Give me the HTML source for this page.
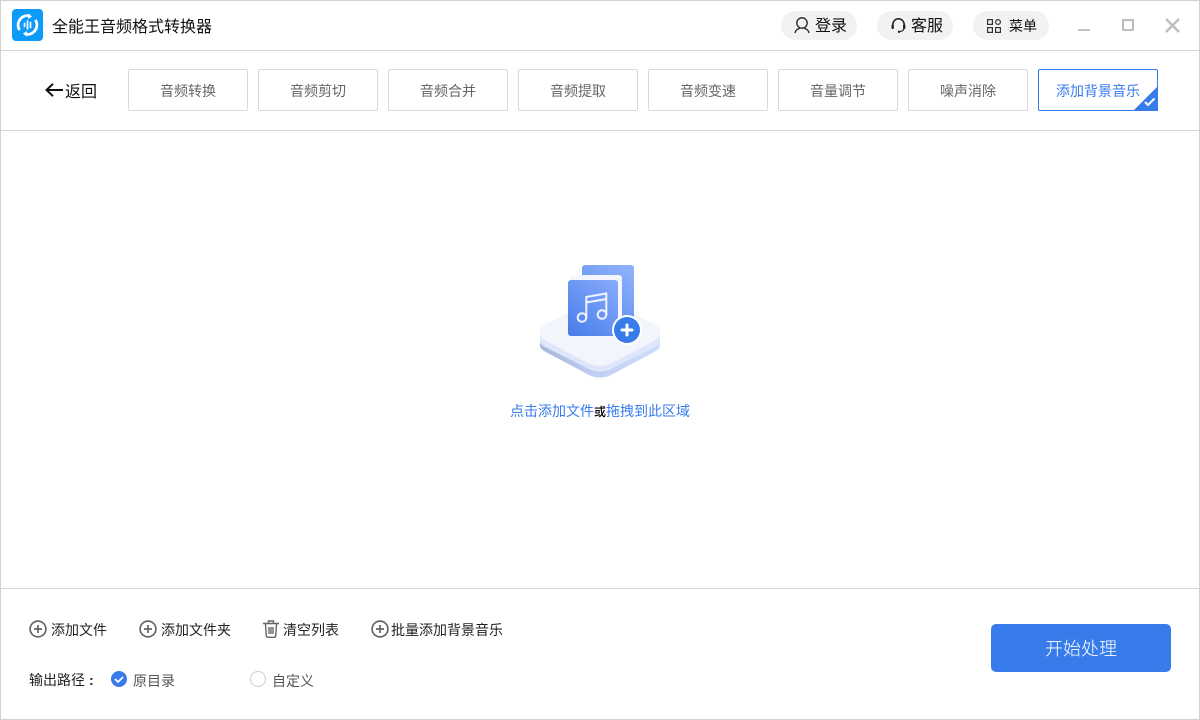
<!DOCTYPE html>
<html lang="zh"><head><meta charset="utf-8"><title>全能王音频格式转换器</title>
<style>
*{box-sizing:border-box;margin:0;padding:0}
html,body{width:1200px;height:720px;overflow:hidden;background:#fff}
body{position:relative;font-family:"Liberation Sans","Noto Sans CJK SC",sans-serif;color:#222}
.a{position:absolute;white-space:nowrap}
.frame{left:0;top:0;width:1200px;height:720px;border:1px solid #d2d2d2;pointer-events:none}
.line{position:absolute;left:1px;width:1198px;height:1px;background:#d6d6d6}
.tab{position:absolute;top:69px;width:120px;height:42px;border:1px solid #d9d9d9;border-radius:2px;font-size:14px;line-height:42px;text-align:center;color:#666}
.pill{position:absolute;top:11px;width:76px;height:29px;border-radius:15px;background:#f2f2f2}
.t14{font-size:14px;line-height:20px}
svg{position:absolute;overflow:visible}
</style></head><body>

<svg style="left:12px;top:9px" width="31" height="32" viewBox="0 0 31 32">
<rect width="31" height="32" rx="4" fill="#0d9bfb"/>
<path d="M7.500 21A9.500 9.500 0 0 1 17 6.700M23.500 11A9.500 9.500 0 0 1 14 25.300" fill="none" stroke="#fff" stroke-width="2.800"/>
<path d="M16.500 4.500l3.500 3-4 2.500zM14.500 27.500l-3.500-3 4-2.500z" fill="#fff"/>
<path d="M12.500 14.500v3M15.500 12v8M18.500 13.500v5" stroke="#fff" stroke-width="1.700" stroke-linecap="round"/>
</svg>
<div class="a" style="left:52px;top:17px;font-size:16px;line-height:22px;color:#111">全能王音频格式转换器</div>

<div class="pill" style="left:781px"></div>
<div class="pill" style="left:877px"></div>
<div class="pill" style="left:973px"></div>
<svg style="left:794px;top:16px" width="16" height="17" viewBox="0 0 16 17" fill="none" stroke="#222" stroke-width="1.300">
<circle cx="8" cy="7" r="5.200"/><path d="M1 17c.3-2.500 2.500-4 4.800-4.700M15 17c-.3-2.500-2.500-4-4.800-4.700"/></svg>
<div class="a" style="left:815px;top:16px;font-size:16px;line-height:22px;color:#111">登录</div>
<svg style="left:891px;top:18px" width="15" height="16" viewBox="0 0 15 16" fill="none" stroke="#222" stroke-width="1.500">
<path d="M1.800 9V6.500a5.700 5.700 0 0 1 11.400 0V9"/><path d="M13.200 9c0 2.500-1.700 4.300-4.500 4.700" stroke-width="1.200"/><rect x=".5" y="6.500" width="2.400" height="4.500" rx="1" fill="#222" stroke="none"/><rect x="12" y="6.500" width="2.400" height="4.500" rx="1" fill="#222" stroke="none"/><circle cx="8" cy="13.800" r="1.200" fill="#222" stroke="none"/></svg>
<div class="a" style="left:911px;top:16px;font-size:16px;line-height:22px;color:#111">客服</div>
<svg style="left:987px;top:19px" width="14" height="14" viewBox="0 0 14 14" fill="none" stroke="#333" stroke-width="1.200">
<rect x=".6" y=".6" width="4.800" height="4.800"/><rect x=".6" y="8.600" width="4.800" height="4.800"/><rect x="8.600" y="8.600" width="4.800" height="4.800"/><circle cx="11" cy="3" r="2.400"/></svg>
<div class="a" style="left:1009px;top:16px;font-size:14px;line-height:20px;color:#111">菜单</div>

<div class="a" style="left:1078px;top:29px;width:12px;height:2px;background:#c4c4c4"></div>
<div class="a" style="left:1122px;top:19px;width:12px;height:12px;border:2px solid #bdbdbd;border-radius:1px"></div>
<svg style="left:1165px;top:18px" width="15" height="15" viewBox="0 0 15 15"><path d="M1 1l13 13M14 1L1 14" stroke="#bdbdbd" stroke-width="2.400"/></svg>

<div class="line" style="top:50px"></div>

<svg style="left:45px;top:83px" width="19" height="14" viewBox="0 0 19 14" fill="none" stroke="#111" stroke-width="2"><path d="M18 7H1.500M8 .8L1.500 7 8 13.200"/></svg>
<div class="a" style="left:65px;top:82px;font-size:16px;line-height:22px;color:#111">返回</div>

<div class="tab" style="left:128px">音频转换</div>
<div class="tab" style="left:258px">音频剪切</div>
<div class="tab" style="left:388px">音频合并</div>
<div class="tab" style="left:518px">音频提取</div>
<div class="tab" style="left:648px">音频变速</div>
<div class="tab" style="left:778px">音量调节</div>
<div class="tab" style="left:908px">噪声消除</div>
<div class="tab" style="left:1038px;border-color:#387cec;color:#387cec">添加背景音乐</div>
<svg style="left:1133px;top:86px" width="25" height="25" viewBox="0 0 25 25"><path d="M25 0V25H0z" fill="#387cec"/><path d="M12 16l3 3 6.500-6.500" fill="none" stroke="#fff" stroke-width="2"/></svg>

<div class="line" style="top:130px"></div>

<svg style="left:520px;top:255px" width="160" height="130" viewBox="0 0 160 130">
<defs>
<linearGradient id="g1" x1=".8" y1="0" x2=".2" y2="1"><stop offset="0" stop-color="#8db0fb"/><stop offset="1" stop-color="#5688ee"/></linearGradient>
<linearGradient id="g2" x1=".9" y1="0" x2=".1" y2="1"><stop offset="0" stop-color="#86aafb"/><stop offset="1" stop-color="#4a7eea"/></linearGradient>
<linearGradient id="g3" x1="0" y1="0" x2="1" y2="0"><stop offset="0" stop-color="#a7b6d9"/><stop offset=".5" stop-color="#c2d0f5"/><stop offset="1" stop-color="#d0dcfb"/></linearGradient>
</defs>
<path d="M20 80v10c0 3 2 5 5 6.500l43 23c8 4 16 4 24 0l43-23c3-1.500 5-3.500 5-6.500V80z" fill="url(#g3)"/>
<path d="M20 78v8c0 2.500 2 4.500 5 6l43 21.500c8 4 16 4 24 0l43-21.500c3-1.500 5-3.500 5-6v-8z" fill="#dfe6fb"/>
<path d="M20 78Q20 72 26 69L70 47Q80 42 90 47L134 69Q140 72 140 78Q140 83 134 86L92 108Q80 114 68 108L26 86Q20 83 20 78z" fill="#f3f5fd"/>
<rect x="62" y="10" width="52" height="66" rx="3" fill="url(#g1)"/>
<rect x="50" y="20" width="52" height="66" rx="3" fill="#f4f6fd"/>
<rect x="48" y="25" width="50" height="56" rx="3" fill="url(#g2)"/>
<g fill="none" stroke="#eef3ff" stroke-width="2"><circle cx="62" cy="62.500" r="4.300"/><circle cx="82" cy="59.500" r="4.300"/><path d="M66.300 62V42l20-3.500V60M66.300 47.500l20-3.500"/></g>
<circle cx="107" cy="75" r="15" fill="#fff"/>
<circle cx="107" cy="75" r="13" fill="#387cec"/>
<path d="M107 70v10M102 75h10" stroke="#fff" stroke-width="3" stroke-linecap="round"/>
</svg>

<div class="a" style="left:510px;top:401px;font-size:14px;line-height:20px;color:#387cec">点击添加文件<span style="color:#000;font-size:12px;font-weight:500">或</span>拖拽到此区域</div>

<div class="line" style="top:588px"></div>

<svg style="left:29px;top:620px" width="18" height="18" viewBox="0 0 18 18" fill="none" stroke="#666" stroke-width="1.700"><circle cx="9" cy="9" r="7.900"/><path d="M9 5v8M5 9h8"/></svg>
<div class="a t14" style="left:51px;top:620px">添加文件</div>
<svg style="left:139px;top:620px" width="18" height="18" viewBox="0 0 18 18" fill="none" stroke="#666" stroke-width="1.700"><circle cx="9" cy="9" r="7.900"/><path d="M9 5v8M5 9h8"/></svg>
<div class="a t14" style="left:161px;top:620px">添加文件夹</div>
<svg style="left:263px;top:620px" width="16" height="18" viewBox="0 0 16 18" fill="none" stroke="#666" stroke-width="1.400"><path d="M0 3.500h16M5.500 3V1h5v2M2.500 3.500l.7 12c.1 1 .8 1.800 1.800 1.800h6c1 0 1.700-.8 1.800-1.800l.7-12M6 7v7M8 7v7M10 7v7"/></svg>
<div class="a t14" style="left:283px;top:620px">清空列表</div>
<svg style="left:371px;top:620px" width="18" height="18" viewBox="0 0 18 18" fill="none" stroke="#666" stroke-width="1.700"><circle cx="9" cy="9" r="7.900"/><path d="M9 5v8M5 9h8"/></svg>
<div class="a t14" style="left:391px;top:620px">批量添加背景音乐</div>

<div class="a t14" style="left:29px;top:670px">输出路径</div>
<div class="a" style="left:89px;top:670px;font-size:14px;line-height:20px;font-weight:700">:</div>
<svg style="left:111px;top:671px" width="16" height="16" viewBox="0 0 16 16"><circle cx="8" cy="8" r="8" fill="#387cec"/><path d="M4 8l3 3 5-5" fill="none" stroke="#fff" stroke-width="1.700"/></svg>
<div class="a t14" style="left:133px;top:671px;color:#555">原目录</div>
<div class="a" style="left:250px;top:671px;width:16px;height:16px;border:1px solid #ccc;border-radius:50%"></div>
<div class="a t14" style="left:272px;top:671px;color:#555">自定义</div>

<div class="a" style="left:991px;top:624px;width:180px;height:48px;background:#387cec;border-radius:5px;color:#fff;font-size:18px;line-height:50px;text-align:center;font-weight:300">开始处理</div>

<div class="a frame"></div>
</body></html>
